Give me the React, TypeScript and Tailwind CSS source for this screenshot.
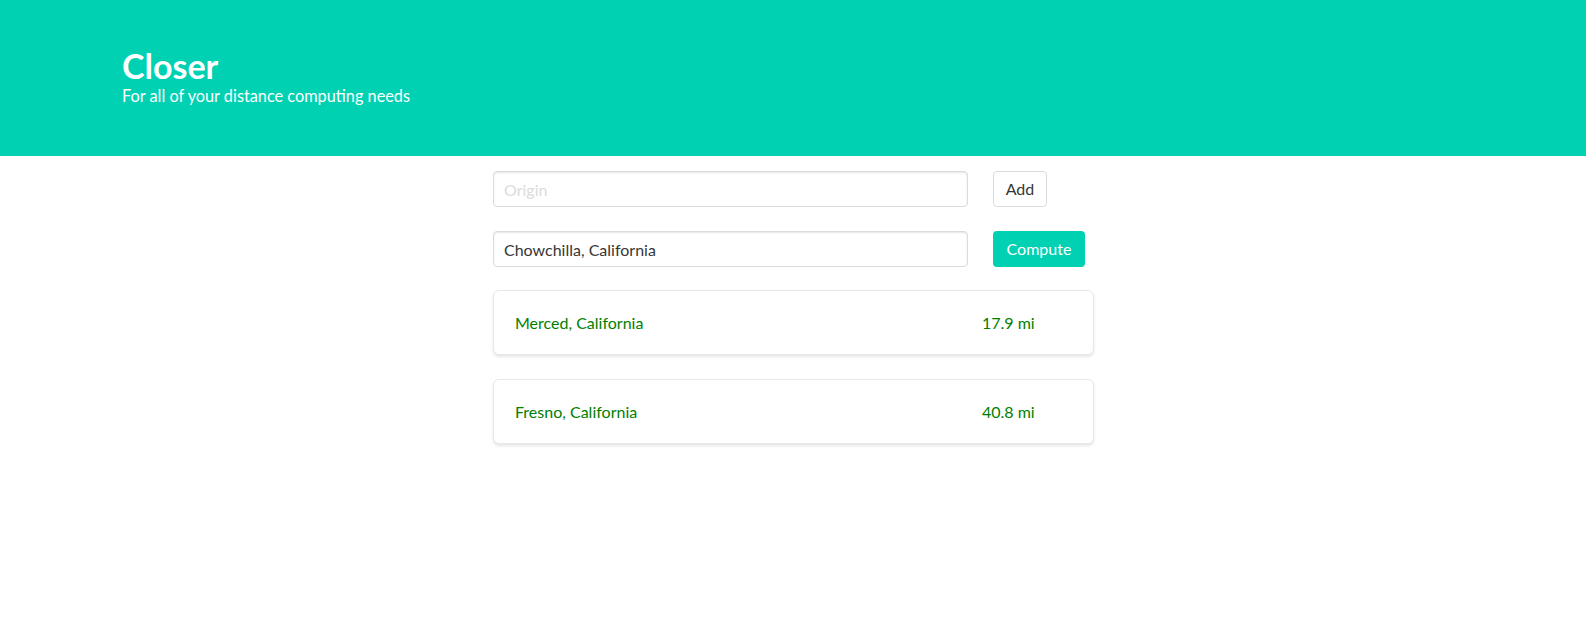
import React, { useState } from 'react';

const results = [
  { name: 'Merced, California', distance: '17.9 mi' },
  { name: 'Fresno, California', distance: '40.8 mi' },
];

const App: React.FC = () => {
  const [origin, setOrigin] = useState('');
  const [destination, setDestination] = useState('Chowchilla, California');

  return (
    <div className="min-h-[617px] bg-white font-['Lato','Open_Sans',sans-serif] text-[#4a4a4a]">
      <section className="bg-[#00d1b2] h-[156px] px-[122px] pt-[47px]">
        <h1 className="text-[34px] leading-[38px] font-bold text-white">Closer</h1>
        <p className="text-[16.3px] leading-[22px] text-white">For all of your distance computing needs</p>
      </section>

      <div className="pl-[493px] pt-[15px]">
        <div className="flex items-center gap-[25px]">
          <input
            value={origin}
            onChange={e => setOrigin(e.target.value)}
            placeholder="Origin"
            className="w-[475px] h-[36px] border border-[#dbdbdb] rounded-[4px] px-[10px] text-[16px] text-[#363636] shadow-[inset_0_1px_2px_rgba(10,10,10,0.1)] outline-none placeholder:text-[#dcdcdc]"
          />
          <button className="w-[54px] h-[36px] border border-[#dbdbdb] rounded-[4px] bg-white text-[16px] text-[#363636] text-center">
            Add
          </button>
        </div>

        <div className="flex items-center gap-[25px] mt-[24px]">
          <input
            value={destination}
            onChange={e => setDestination(e.target.value)}
            className="w-[475px] h-[36px] border border-[#dbdbdb] rounded-[4px] px-[10px] text-[16px] text-[#363636] shadow-[inset_0_1px_2px_rgba(10,10,10,0.1)] outline-none"
          />
          <button className="w-[92px] h-[36px] border border-transparent rounded-[4px] bg-[#00d1b2] text-[16px] text-white text-center">
            Compute
          </button>
        </div>

        <div className="flex flex-col gap-[24px] mt-[23px] w-[601px]">
          {results.map(r => (
            <div
              key={r.name}
              className="h-[65px] flex items-center px-[21px] border border-[#e8e8e8] rounded-[6px] bg-white shadow-[0_2px_3px_rgba(10,10,10,0.1)] text-[16px] text-[#008000]"
            >
              <span className="w-[467px]">{r.name}</span>
              <span>{r.distance}</span>
            </div>
          ))}
        </div>
      </div>
    </div>
  );
};

export default App;
